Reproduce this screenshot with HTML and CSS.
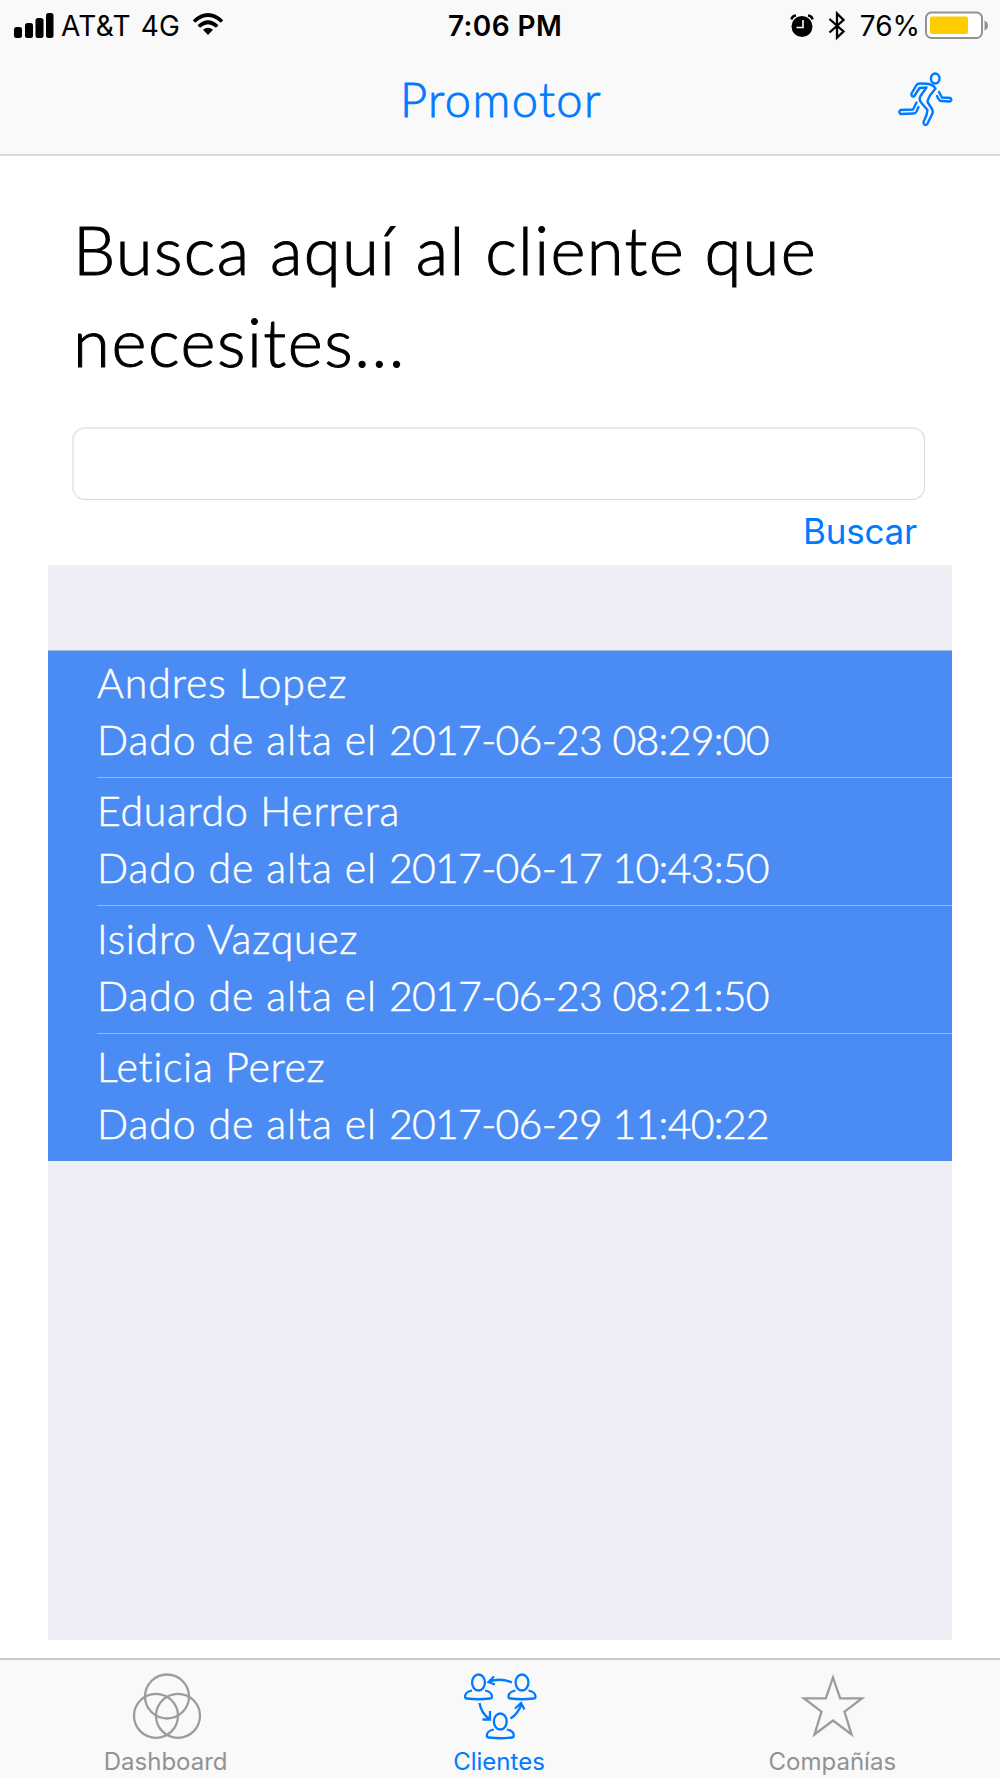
FILE: index.html
```html
<!DOCTYPE html>
<html lang="es">
<head>
<meta charset="utf-8">
<title>Promotor</title>
<link rel="stylesheet" href="styles.css">
</head>
<body>
<header class="top">
  <div class="status">
    <div class="status-left">
      <svg class="signal" width="40" height="26" viewBox="0 0 40 26"><rect x="0" y="14" width="8" height="11" rx="2.5"/><rect x="11" y="10" width="8" height="15" rx="2.5"/><rect x="21.500" y="5" width="8" height="20" rx="2.500"/><rect x="32" y="0" width="7.500" height="25" rx="2.500"/></svg>
      <span class="carrier">AT&amp;T</span>
      <span class="network">4G</span>
      <svg class="wifi" width="32" height="23" viewBox="0 0 32 23"><path d="M2 8.500Q16-4.500 30 8.500M6.800 13.500Q16 5 25.200 13.500" fill="none" stroke="#000" stroke-width="3.600"/><path d="M16 22l-5-5.200q5-4.200 10 0z"/></svg>
    </div>
    <span class="time">7:06 PM</span>
    <div class="status-right">
      <svg class="alarm" width="24" height="24" viewBox="0 0 24 24"><circle cx="12" cy="12.500" r="10.500"/><path d="M1.500 5.500Q2 2 6 1.500M22.500 5.500Q22 2 18 1.500" fill="none" stroke="#000" stroke-width="2.500"/><path d="M13 6v7.500H6.500" fill="none" stroke="#fff" stroke-width="1.600"/></svg>
      <svg class="bluetooth" width="18" height="30" viewBox="0 0 18 30"><path d="M1.500 8l14 12.500L9 26.500v-24L15.500 9l-14 12.500" fill="none" stroke="#000" stroke-width="2.300"/></svg>
      <span class="percent">76%</span>
      <svg class="battery" width="64" height="29" viewBox="0 0 64 29"><rect x="1" y="1.500" width="56" height="25.500" rx="5.500" fill="#fff" stroke="#929292" stroke-width="2"/><rect x="5" y="5.500" width="38" height="17.500" rx="2" fill="#fc0"/><path d="M59.500 9.500q3.500 1.500 3.500 5t-3.500 5z" fill="#929292"/></svg>
    </div>
  </div>
  <div class="nav">
    <h1 class="title">Promotor</h1>
    <svg class="runner" width="56" height="56" viewBox="0 0 56 56"><ellipse cx="37.200" cy="6.500" rx="4.300" ry="5"/><path d="M32.500 12.500Q29 11.500 22 11.500Q19.500 11.500 18.500 13L13.500 21.500Q13 25 16 24.500L21.500 16L28.500 15.500L22.500 24Q20.500 28 23.500 31L29.500 38L28.500 43L25.500 50Q25.500 54 29 52.500L34 42.500Q35.500 39.500 34 37L29.500 30Q29.500 28 32 23.500L37.500 16.500Q36 13.500 32.500 12.500"/><path d="M18.500 30.500L15 37.500L2.500 38Q0 40 2.500 42L15.500 41.500Q17.500 41.500 18.500 39.500L20.500 35"/><path d="M41 20L44 25.500L52.500 26Q54.500 28 52 29.500L43.500 29Q41 29 39 24"/></svg>
  </div>
</header>
<main class="content">
  <h2 class="heading"><span class="heading-first">Busca aquí al cliente que</span><br><span class="heading-second">necesites...</span></h2>
  <input class="search" type="text" aria-label="Cliente">
  <button class="submit">Buscar</button>
  <section class="table">
    <ul class="rows">
      <li class="row"><span class="name name-wide">Andres Lopez</span><span class="date">Dado de alta el <span class="stamp">2017-06-23 08:29:00</span></span></li>
      <li class="row"><span class="name">Eduardo Herrera</span><span class="date">Dado de alta el <span class="stamp">2017-06-17 10:43:50</span></span></li>
      <li class="row"><span class="name">Isidro Vazquez</span><span class="date">Dado de alta el <span class="stamp">2017-06-23 08:21:50</span></span></li>
      <li class="row"><span class="name">Leticia Perez</span><span class="date">Dado de alta el <span class="stamp">2017-06-29 11:40:22</span></span></li>
    </ul>
  </section>
</main>
<nav class="tabs">
  <a class="tab"><svg width="70" height="68" viewBox="0 0 70 68"><circle cx="35" cy="23.500" r="22"/><circle cx="24" cy="42.800" r="22"/><circle cx="46" cy="42.800" r="22"/></svg><span class="label">Dashboard</span></a>
  <a class="tab active"><svg width="74" height="68" viewBox="0 0 74 68"><g id="person"><ellipse cx="15.500" cy="9.500" rx="6.400" ry="8"/><path d="M9 17.500Q2 19 2 23.500Q2 25.500 4 25.500Q15.500 27 27 25.500Q29 25.500 29 23.500Q29 19 22 17.500"/></g><use href="#person" x="43.500"/><use href="#person" x="21.800" y="39"/><path d="M49 9.500Q38 4.500 26 8.500M31 3.500L25.500 9L32 11.500M16.500 30Q18 40 26.500 46M27 38V46.500H19.500M47.500 45.500Q55 41 58.500 31M52 35.500L58 30L61.500 36.500"/></svg><span class="label">Clientes</span></a>
  <a class="tab"><svg width="70" height="68" viewBox="0 0 70 68"><path d="M35 4.500L42.200 25.400H64L46.500 38.600L53.500 61.500L35 47.500L16.500 61.500L23.500 38.600L6 25.400H27.800Z"/></svg><span class="label">Compañías</span></a>
</nav>
</body>
</html>
```
FILE: styles.css
```css
* { box-sizing: border-box; }
body { margin: 0; width: 1000px; height: 1778px; display: flex; flex-direction: column; background: #fff; font-family: Inter, sans-serif; color: #000; }
.top { height: 156px; background: #f9f9f9; border-bottom: 2px solid #dadada; }
.status { height: 50px; display: grid; grid-template-columns: 1fr auto 1fr; align-items: center; font-size: 28px; line-height: 50px; }
.status-left, .status-right { display: flex; align-items: center; }
.status-left { padding-left: 14px; }
.status-right { justify-content: flex-end; padding-right: 11px; }
.status svg { flex: none; }
.carrier { margin-left: 7px; letter-spacing: 0.3px; }
.network { margin-left: 10px; }
.wifi { margin: 0 0 3px 12px; }
.time { font-weight: 600; letter-spacing: 0.4px; padding: 1px 0 0 10px; }
.bluetooth { margin-left: 14px; }
.percent { margin-left: 14px; padding-top: 1px; }
.battery { margin-left: 5px; }
.nav { height: 104px; display: grid; grid-template-columns: 1fr auto 1fr; padding: 0 46px; }
.title { grid-column: 2; margin: 0; font: 300 47px/98px Lato, sans-serif; letter-spacing: 1.4px; color: #007aff; -webkit-text-stroke: 0.8px; padding-left: 2px; }
.runner { justify-self: end; margin-top: 22px; fill: none; stroke: #007aff; stroke-width: 2.4; stroke-linejoin: round; stroke-linecap: round; }
.content { flex: 1; display: flex; flex-direction: column; padding: 47px 48px 0; }
.heading { height: 184px; margin: 0 0 0 25px; font: 300 67px/92px Lato, sans-serif; white-space: nowrap; -webkit-text-stroke: 1px; }
.heading-first { letter-spacing: 1.32px; }
.heading-second { letter-spacing: 1.55px; }
.search { height: 73px; margin: 40px 27px 0 24px; border: 1px solid #d6d6d6; border-top: 2px solid #e9e9e9; border-left: 2px solid #e9e9e9; border-radius: 13px; background: #fff; }
.submit { align-self: flex-end; height: 65px; padding: 0 0 2px; border: 0; margin-right: 35px; background: none; font: 400 35px/63px Inter, sans-serif; letter-spacing: -0.2px; color: #007aff; }
.table { height: 1075px; padding-top: 85px; background: #efeef4; }
.rows { list-style: none; margin: 0; padding: 0; background: #4b8bf4; border-top: 1px solid #a0b8e0; }
.row { height: 128px; margin-left: 49px; padding-top: 4px; display: flex; flex-direction: column; align-items: flex-start; font: 300 41px/57px Lato, sans-serif; letter-spacing: 0.7px; color: #fff; border-bottom: 1px solid #9ab6ea; white-space: nowrap; -webkit-text-stroke: 0.5px; }
.row:first-child { height: 127px; padding-top: 3px; }
.row:last-child { height: 127px; border: 0; }
.name-wide { letter-spacing: 0.95px; }
.date { letter-spacing: 0.9px; }
.stamp { letter-spacing: -0.75px; }
.tabs { height: 120px; display: grid; grid-template-columns: repeat(3, 1fr); background: #f9f9f9; border-top: 2px solid #c9c9c9; }
.tab { display: flex; flex-direction: column; align-items: center; padding-top: 13px; font-size: 24px; line-height: 34px; color: #929292; }
.tab svg { fill: none; stroke: #9c9c9c; stroke-width: 2.3; }
.label { margin: 4px 2px 0 0; }
.active { color: #007aff; }
.active svg { stroke: #007aff; }
```
